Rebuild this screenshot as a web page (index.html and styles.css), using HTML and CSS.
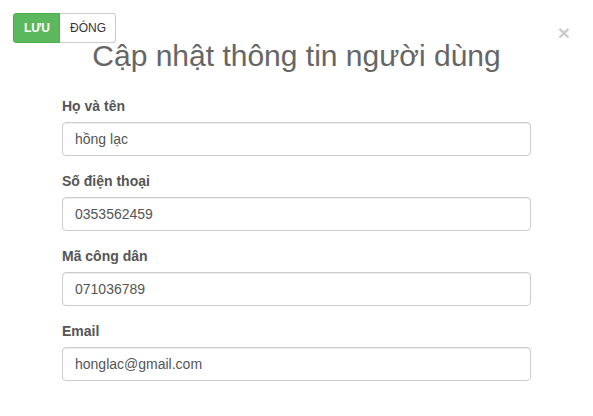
FILE: index.html
```html
<!DOCTYPE html>
<html lang="vi">
<head>
<meta charset="utf-8">
<link rel="stylesheet" href="styles.css">
</head>
<body>
<div class="modal">
  <div class="modal-header">
    <div class="btn-group">
      <button class="btn btn-success">LƯU</button>
      <button class="btn btn-default">ĐÓNG</button>
    </div>
    <button class="close">×</button>
    <h2 class="title">Cập nhật thông tin người dùng</h2>
  </div>
  <form class="form">
    <div class="form-group">
      <label>Họ và tên</label>
      <input class="form-control" value="hồng lạc">
    </div>
    <div class="form-group">
      <label>Số điện thoại</label>
      <input class="form-control" value="0353562459">
    </div>
    <div class="form-group">
      <label>Mã công dân</label>
      <input class="form-control" value="071036789">
    </div>
    <div class="form-group">
      <label>Email</label>
      <input class="form-control" value="honglac@gmail.com">
    </div>
  </form>
</div>
</body>
</html>
```

FILE: styles.css
```css
* { box-sizing: border-box; }
html, body { margin: 0; padding: 0; background: #fff; }
body {
  font-family: "Liberation Sans", Arial, sans-serif;
  font-size: 14px;
  color: #333;
  width: 593px;
  height: 416px;
  overflow: hidden;
}
.modal { position: relative; padding: 13px 0 0 13px; }
.modal-header { position: relative; }
.btn-group { display: flex; }
.btn {
  font-family: inherit;
  font-size: 12px;
  line-height: 18px;
  height: 30px;
  padding: 5px 10px;
  border: 1px solid #ccc;
  cursor: pointer;
  margin: 0;
}
.btn-success {
  background: #5cb85c;
  border-color: #4cae4c;
  color: #fff;
  font-weight: bold;
  border-radius: 3px 0 0 3px;
  width: 47px;
}
.btn-default {
  background: #fff;
  color: #333;
  border-left: none;
  border-radius: 0 3px 3px 0;
  width: 56px;
}
.close {
  position: absolute;
  top: 9px;
  right: 23px;
  background: none;
  border: 0;
  padding: 0;
  font-family: inherit;
  font-size: 21px;
  font-weight: bold;
  line-height: 21px;
  color: #000;
  opacity: 0.2;
}
.title {
  margin: -4px 0 0 -13px;
  text-align: center;
  font-size: 30px;
  font-weight: normal;
  line-height: 33px;
  color: #666;
}
.form { width: 469px; margin: 24px 0 0 49px; }
.form-group { display: flex; flex-direction: column; margin-bottom: 15px; }
label {
  font-weight: bold;
  font-size: 14px;
  line-height: 21px;
  color: #555;
  margin-bottom: 5px;
}
.form-control {
  height: 34px;
  padding: 6px 12px;
  font-family: inherit;
  font-size: 14px;
  color: #555;
  border: 1px solid #ccc;
  border-radius: 4px;
  box-shadow: inset 0 1px 1px rgba(0,0,0,.075);
}
```
